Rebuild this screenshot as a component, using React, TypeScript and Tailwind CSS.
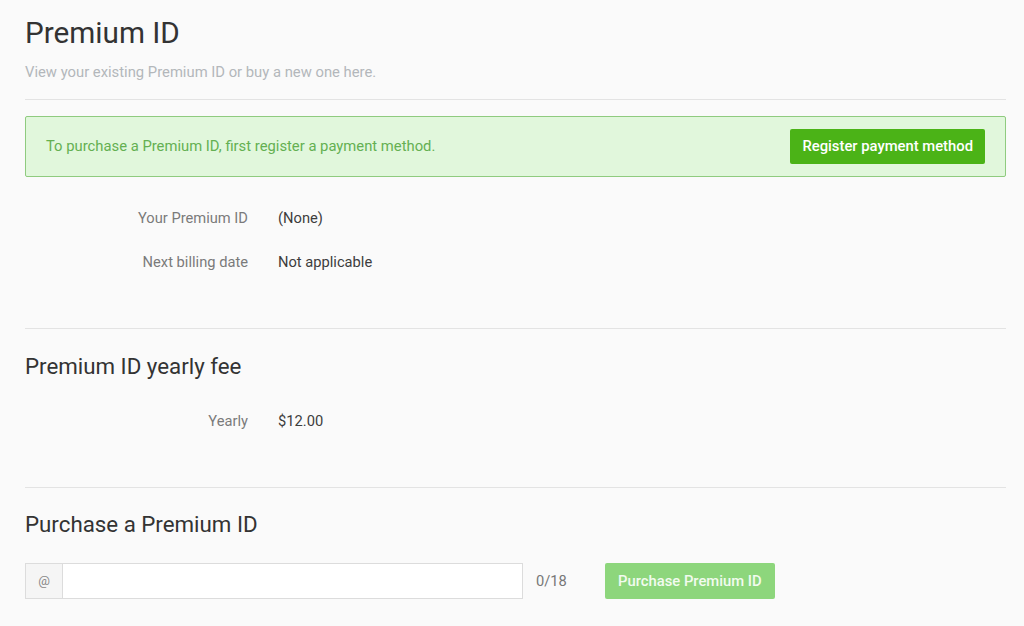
import React, { useState } from 'react';

const rows = [
  { label: 'Your Premium ID', value: '(None)' },
  { label: 'Next billing date', value: 'Not applicable' },
];

function InfoRow({ label, value, className = '' }: { label: string; value: string; className?: string }) {
  return (
    <div className={`flex items-center text-[14.7px] leading-[20px] ${className}`}>
      <div className="w-[223px] text-right text-[#7a7a7a]">{label}</div>
      <div className="ml-[30px] text-[#3d3d3d]">{value}</div>
    </div>
  );
}

export default function App() {
  const [premiumId, setPremiumId] = useState('');

  return (
    <div className="min-h-screen bg-[#fafafa] pl-[25px] pr-[18px] pt-[16px] font-['Roboto',_'Liberation_Sans',_sans-serif]">
      <h1 className="text-[29.7px] leading-[34px] text-[#333]">Premium ID</h1>
      <p className="mt-[12px] text-[14.8px] leading-[20px] text-[#b3b7bb]">
        View your existing Premium ID or buy a new one here.
      </p>
      <div className="mt-[17px] h-px bg-[#e3e3e3]" />

      <div className="mt-[16px] flex h-[61px] items-center justify-between rounded-[2px] border border-[#8fcb7f] bg-[#e1f7dc] pl-[20px] pr-[20px]">
        <span className="text-[14.8px] text-[#64b052]">To purchase a Premium ID, first register a payment method.</span>
        <button className="h-[35px] rounded-[2px] bg-[#4bb317] px-[12px] text-[14.8px] font-medium text-white">
          Register payment method
        </button>
      </div>

      <div className="mt-[31px] flex flex-col gap-[24px]">
        {rows.map(r => (
          <InfoRow key={r.label} label={r.label} value={r.value} />
        ))}
      </div>
      <div className="mt-[56px] h-px bg-[#e3e3e3]" />

      <h2 className="mt-[23px] text-[22.3px] leading-[28px] text-[#333]">Premium ID yearly fee</h2>
      <InfoRow className="mt-[31px]" label="Yearly" value="$12.00" />
      <div className="mt-[56px] h-px bg-[#e3e3e3]" />

      <h2 className="mt-[22px] text-[22.3px] leading-[28px] text-[#333]">Purchase a Premium ID</h2>
      <div className="mt-[25px] flex items-center">
        <div className="flex h-[36px] w-[498px] border border-[#dcdcdc] bg-white">
          <span className="flex w-[37px] items-center justify-center border-r border-[#dcdcdc] bg-[#f5f5f5] text-[13px] text-[#888]">@</span>
          <input
            value={premiumId}
            onChange={e => setPremiumId(e.target.value.slice(0, 18))}
            className="flex-1 px-[10px] text-[14px] outline-none"
          />
        </div>
        <span className="ml-[13px] text-[14.7px] text-[#777]">{premiumId.length}/18</span>
        <button className="ml-[38px] h-[36px] w-[170px] rounded-[2px] bg-[#8dd67c] text-[14.8px] font-medium text-[#f2fbef]">
          Purchase Premium ID
        </button>
      </div>
    </div>
  );
}
